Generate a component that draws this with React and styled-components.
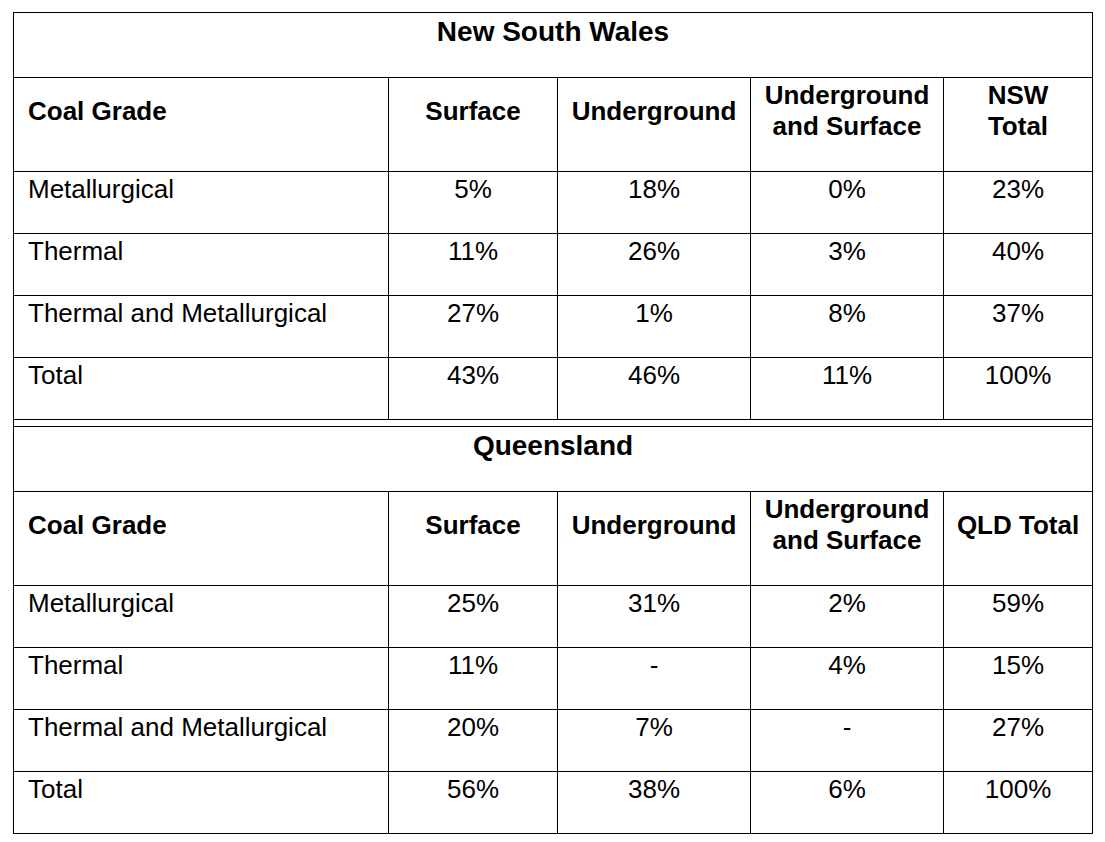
import React from "react";
import styled, { createGlobalStyle } from "styled-components";

const GlobalStyle = createGlobalStyle`
  html, body {
    margin: 0;
    padding: 0;
    background: #fff;
  }
  body {
    font-family: "Liberation Sans", Arial, Helvetica, sans-serif;
    color: #000;
  }
`;

const COLS = [375, 169, 193, 193, 148];

const tables = [
  {
    title: "New South Wales",
    total: ["NSW", "Total"],
    rows: [
      ["Metallurgical", "5%", "18%", "0%", "23%"],
      ["Thermal", "11%", "26%", "3%", "40%"],
      ["Thermal and Metallurgical", "27%", "1%", "8%", "37%"],
      ["Total", "43%", "46%", "11%", "100%"],
    ],
  },
  {
    title: "Queensland",
    total: ["QLD Total"],
    rows: [
      ["Metallurgical", "25%", "31%", "2%", "59%"],
      ["Thermal", "11%", "-", "4%", "15%"],
      ["Thermal and Metallurgical", "20%", "7%", "-", "27%"],
      ["Total", "56%", "38%", "6%", "100%"],
    ],
  },
];

function Region({ data, top }) {
  return (
    <Table $top={top}>
      <colgroup>
        {COLS.map((w, i) => (
          <Col key={i} $w={w} />
        ))}
      </colgroup>
      <thead>
        <tr>
          <Title colSpan={5}>{data.title}</Title>
        </tr>
        <tr>
          <Head $left>Coal Grade</Head>
          <Head>Surface</Head>
          <Head>Underground</Head>
          <Head>
            Underground
            <br />
            and Surface
          </Head>
          <Head $last>
            {data.total.map((t, i) => (
              <React.Fragment key={i}>
                {i > 0 && <br />}
                {t}
              </React.Fragment>
            ))}
          </Head>
        </tr>
      </thead>
      <tbody>
        {data.rows.map((row) => (
          <tr key={row[0]}>
            {row.map((v, i) => (
              <Cell key={i} $left={i === 0} $last={i === 4}>
                {v}
              </Cell>
            ))}
          </tr>
        ))}
      </tbody>
    </Table>
  );
}

export default function App() {
  return (
    <>
      <GlobalStyle />
      <Page>
        <Frame>
          <Region data={tables[0]} />
          <Region data={tables[1]} top />
        </Frame>
      </Page>
    </>
  );
}

const Page = styled.div`
  padding: 12px 0 0 13px;
`;

const Frame = styled.div`
  width: 1078px;
  border: 1px solid #000;
  border-bottom: none;
  display: flex;
  flex-direction: column;
  gap: 6px;
`;

const Table = styled.table`
  width: 1078px;
  table-layout: fixed;
  border-collapse: separate;
  border-spacing: 0;
  border-top: ${(p) => (p.$top ? "1px solid #000" : "none")};
`;

const Col = styled.col`
  width: ${(p) => p.$w}px;
`;

const Title = styled.th`
  box-sizing: border-box;
  height: 65px;
  padding: 2px 14px 0;
  vertical-align: top;
  text-align: center;
  font-size: 28px;
  font-weight: 700;
  line-height: 1.2;
  border-bottom: 1px solid #000;
`;

const Head = styled.th`
  box-sizing: border-box;
  height: 94px;
  padding: 2px ${(p) => (p.$left ? "14px" : "8px")} 29px;
  vertical-align: middle;
  text-align: ${(p) => (p.$left ? "left" : "center")};
  font-size: 26px;
  font-weight: 700;
  line-height: 31px;
  white-space: nowrap;
  border-bottom: 1px solid #000;
  border-right: ${(p) => (p.$last ? "none" : "1px solid #000")};
`;

const Cell = styled.td`
  box-sizing: border-box;
  height: 62px;
  padding: 2px ${(p) => (p.$left ? "14px" : "8px")} 0;
  vertical-align: top;
  text-align: ${(p) => (p.$left ? "left" : "center")};
  font-size: 26px;
  font-weight: 400;
  line-height: 31px;
  white-space: nowrap;
  border-bottom: 1px solid #000;
  border-right: ${(p) => (p.$last ? "none" : "1px solid #000")};
`;
